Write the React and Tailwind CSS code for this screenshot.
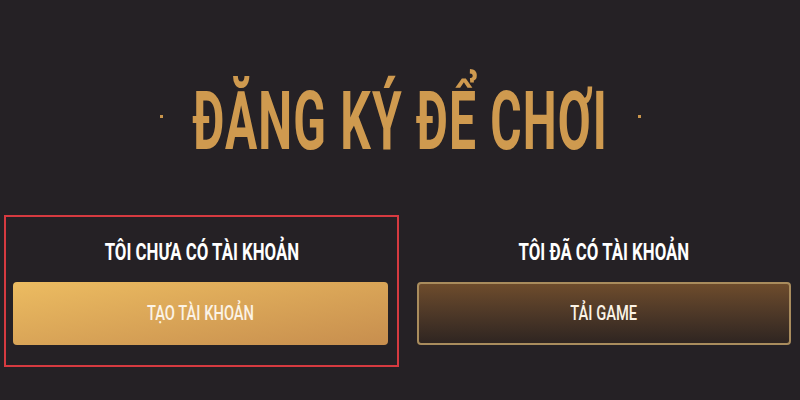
import React from "react";

export default function App() {
  return (
    <div className="w-[800px] h-[400px] bg-[#252125] overflow-hidden" style={{ fontFamily: "Roboto, 'Noto Sans', sans-serif" }}>
      <div className="pt-[80px] flex justify-center items-center">
        <div className="w-[3px] h-[3px] bg-[#c9954c] mb-[10px]" />
        <div className="w-[475px] h-[82px] flex justify-center items-center">
          <span className="inline-block whitespace-nowrap text-[82px] leading-[82px] font-bold text-[#cf9a4f] scale-x-[0.585] tracking-[2px]">
            ĐĂNG KÝ ĐỂ CHƠI
          </span>
        </div>
        <div className="w-[3px] h-[3px] bg-[#c9954c] mb-[10px]" />
      </div>
      <div className="flex pl-[4px] mt-[53px]">
        <div className="w-[395px] border-2 border-[#d63a40] px-[7px] pb-[20px]">
          <div className="mt-[20px] h-[30px] flex justify-center items-center">
            <span className="inline-block whitespace-nowrap text-[24px] leading-[30px] font-bold text-white scale-x-[0.7]">
              TÔI CHƯA CÓ TÀI KHOẢN
            </span>
          </div>
          <div className="mt-[15px] h-[63px] mr-[2px] rounded-[4px] bg-gradient-to-br from-[#ecbc61] to-[#c78e4e] flex justify-center items-center">
            <span className="inline-block whitespace-nowrap text-[21px] font-medium text-[#fbf3e6] scale-x-[0.7]">
              TẠO TÀI KHOẢN
            </span>
          </div>
        </div>
        <div className="w-[392px] ml-[9px] border-2 border-transparent px-[7px] pb-[20px]">
          <div className="mt-[20px] h-[30px] flex justify-center items-center">
            <span className="inline-block whitespace-nowrap text-[24px] leading-[30px] font-bold text-white scale-x-[0.7]">
              TÔI ĐÃ CÓ TÀI KHOẢN
            </span>
          </div>
          <div className="mt-[15px] h-[63px] rounded-[4px] border-2 border-[#a98c5d] bg-gradient-to-b from-[#6e4c2c] to-[#2f2521] flex justify-center items-center">
            <span className="inline-block whitespace-nowrap text-[21px] font-medium text-[#fbf3e6] scale-x-[0.7]">
              TẢI GAME
            </span>
          </div>
        </div>
      </div>
    </div>
  );
}
